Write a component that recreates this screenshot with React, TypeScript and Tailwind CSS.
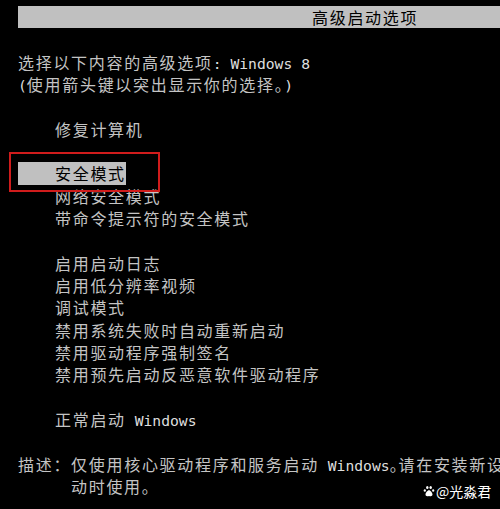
import React from 'react';

const Mono: React.FC<{ children: React.ReactNode }> = ({ children }) => (
  <span className="font-['DejaVu_Sans_Mono',monospace] text-[14.7px] tracking-normal text-[#dedede] whitespace-pre">
    {children}
  </span>
);

const Blank = () => <div className="h-[22.33px]" />;

const Row: React.FC<{ children: React.ReactNode; indent?: 'top' | 'item' | 'desc' }> = ({ children, indent = 'item' }) => {
  const pad = indent === 'top' ? 'pl-[18px]' : indent === 'desc' ? 'pl-[71px]' : 'pl-[55px]';
  return <div className={`${pad} h-[22.33px] whitespace-nowrap`}>{children}</div>;
};

const Paw = () => (
  <svg viewBox="0 0 24 24" className="w-[12px] h-[12px]" fill="currentColor">
    <ellipse cx="8.6" cy="5" rx="2.4" ry="3" />
    <ellipse cx="15.4" cy="5" rx="2.4" ry="3" />
    <ellipse cx="3.6" cy="11" rx="2.2" ry="2.7" />
    <ellipse cx="20.4" cy="11" rx="2.2" ry="2.7" />
    <path d="M12 10.5c-3.2 0-7 5.2-7 8.6 0 2.2 1.6 3.4 3.6 3.4 1.5 0 2.3-.7 3.4-.7s1.9.7 3.4.7c2 0 3.6-1.2 3.6-3.4 0-3.4-3.8-8.6-7-8.6z" />
  </svg>
);

export default function App() {
  return (
    <div className="relative w-[500px] h-[509px] overflow-hidden bg-black pt-[6px] font-['Noto_Sans_CJK_SC',sans-serif] text-[16px] tracking-[1.7px] leading-[22.33px] text-[#c4c4c4]">
      {/* title bar */}
      <div className="ml-[18px] h-[22.33px] bg-[#c0c0c0] pl-[294px] text-black whitespace-nowrap">
        高级启动选项
      </div>
      <Blank />
      <Row indent="top">
        选择以下内容的高级选项<Mono>: Windows 8</Mono>
      </Row>
      <Row indent="top">
        <Mono>(</Mono>使用箭头键以突出显示你的选择。<Mono>)</Mono>
      </Row>
      <Blank />
      <Row>修复计算机</Row>
      <Blank />
      <div className="pl-[18px] h-[22.33px] whitespace-nowrap">
        <span className="relative inline-block bg-[#c0c0c0] pl-[37px] text-black">
          安全模式
          <span className="absolute -left-[9px] -top-[10px] w-[151px] h-[40px] border-2 border-[#d01c1c]" />
        </span>
      </div>
      <Row>网络安全模式</Row>
      <Row>带命令提示符的安全模式</Row>
      <Blank />
      <Row>启用启动日志</Row>
      <Row>启用低分辨率视频</Row>
      <Row>调试模式</Row>
      <Row>禁用系统失败时自动重新启动</Row>
      <Row>禁用驱动程序强制签名</Row>
      <Row>禁用预先启动反恶意软件驱动程序</Row>
      <Blank />
      <Row>
        正常启动<Mono> Windows</Mono>
      </Row>
      <Blank />
      <div className="pl-[18px] pr-[2px] h-[22.33px] whitespace-nowrap overflow-hidden">
        描述：仅使用核心驱动程序和服务启动<Mono> Windows</Mono>
        <span className="tracking-[-7.15px]">。</span>
        请在安装新设备或驱动程序后无法启
      </div>
      <Row indent="desc">动时使用。</Row>

      {/* watermark */}
      <div className="absolute left-[423px] top-[483px] flex items-center gap-[1px] text-white tracking-normal text-[14px] leading-[16px]">
        <Paw />
        <span>@光淼君</span>
      </div>
    </div>
  );
}
